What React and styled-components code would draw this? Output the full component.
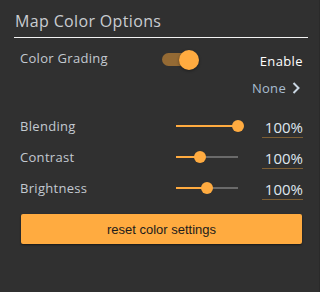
import styled, { createGlobalStyle } from "styled-components";

const GlobalStyle = createGlobalStyle`
  html, body {
    margin: 0;
    padding: 0;
    background: #303030;
  }
  body {
    font-family: "Open Sans", "Liberation Sans", sans-serif;
  }
`;

const Panel = styled.div`
  width: 320px;
  height: 292px;
  box-sizing: border-box;
  background: #303030;
  padding: 10px 11px 0 14px;
  border-right: 1px solid #2a2a2a;
`;

const Title = styled.div`
  font-size: 16px;
  line-height: 22px;
  letter-spacing: 0.35px;
  color: #c9ccd0;
  padding-left: 1px;
  padding-bottom: 5px;
  border-bottom: 1px solid #f2f2f2;
`;

const Body = styled.div`
  padding: 0 5px 0 6px;
`;

const ToggleRow = styled.div`
  display: flex;
  align-items: center;
  height: 32px;
  margin-top: 4px;
`;

const Label = styled.span`
  font-size: 13px;
  letter-spacing: 0.3px;
  color: #c3c9d0;
  width: ${(p) => p.$width || "auto"};
  flex-shrink: 0;
`;

const Switch = styled.div`
  position: relative;
  width: 32px;
  height: 13px;
  border-radius: 7px;
  background: #946a34;
  margin-top: 3px;
`;

const Knob = styled.div`
  position: absolute;
  right: -5px;
  top: -3.5px;
  width: 20px;
  height: 20px;
  border-radius: 50%;
  background: #ffab40;
  box-shadow: 0 1px 3px rgba(0, 0, 0, 0.4);
`;

const Enable = styled.span`
  margin-left: auto;
  font-size: 13px;
  letter-spacing: 0.4px;
  color: #ffffff;
  margin-top: 6px;
`;

const NoneRow = styled.div`
  display: flex;
  justify-content: flex-end;
  align-items: center;
  gap: 6px;
  height: 28px;
  color: #a9bdd0;
  font-size: 13px;
  letter-spacing: 0.3px;
  padding-right: 3px;
`;

const SliderRow = styled.div`
  display: grid;
  grid-template-columns: 156px 62px 1fr;
  align-items: center;
  height: 31px;
`;

const Track = styled.div`
  position: relative;
  height: 2px;
  background: #6a6a6a;
`;

const Fill = styled.div`
  height: 2px;
  background: #ffab40;
`;

const Thumb = styled.div`
  position: absolute;
  top: -5px;
  width: 12px;
  height: 12px;
  margin-left: -6px;
  border-radius: 50%;
  background: #ffab40;
`;

const Value = styled.div`
  justify-self: end;
  width: 41px;
  font-size: 15px;
  line-height: 20px;
  color: #dfe6ee;
  text-align: right;
  border-bottom: 1px solid #7c5e34;
  margin-top: 4px;
`;

const ResetButton = styled.button`
  display: block;
  width: 281px;
  height: 30px;
  margin: 11px 0 0 1px;
  border: none;
  border-radius: 2px;
  background: #ffab40;
  color: #1c1c1c;
  font-family: "Liberation Sans", Arial, sans-serif;
  font-size: 13px;
  box-shadow: 0 1px 2px rgba(0, 0, 0, 0.5);
`;

const sliders = [
  { name: "Blending", pct: 100 },
  { name: "Contrast", pct: 38 },
  { name: "Brightness", pct: 50 },
];

function Chevron() {
  return (
    <svg width="8" height="12" viewBox="0 0 8 12">
      <path d="M1.5 1 L6.5 6 L1.5 11" fill="none" stroke="#c9d6e2" strokeWidth="2" />
    </svg>
  );
}

export default function App() {
  return (
    <>
      <GlobalStyle />
      <Panel>
        <Title>Map Color Options</Title>
        <Body>
          <ToggleRow>
            <Label $width="142px">Color Grading</Label>
            <Switch>
              <Knob />
            </Switch>
            <Enable>Enable</Enable>
          </ToggleRow>
          <NoneRow>
            None <Chevron />
          </NoneRow>
          <div style={{ height: 8 }} />
          {sliders.map((s) => (
            <SliderRow key={s.name}>
              <Label>{s.name}</Label>
              <Track>
                <Fill style={{ width: `${s.pct}%` }} />
                <Thumb style={{ left: `${s.pct}%` }} />
              </Track>
              <Value>100%</Value>
            </SliderRow>
          ))}
          <ResetButton>reset color settings</ResetButton>
        </Body>
      </Panel>
    </>
  );
}
